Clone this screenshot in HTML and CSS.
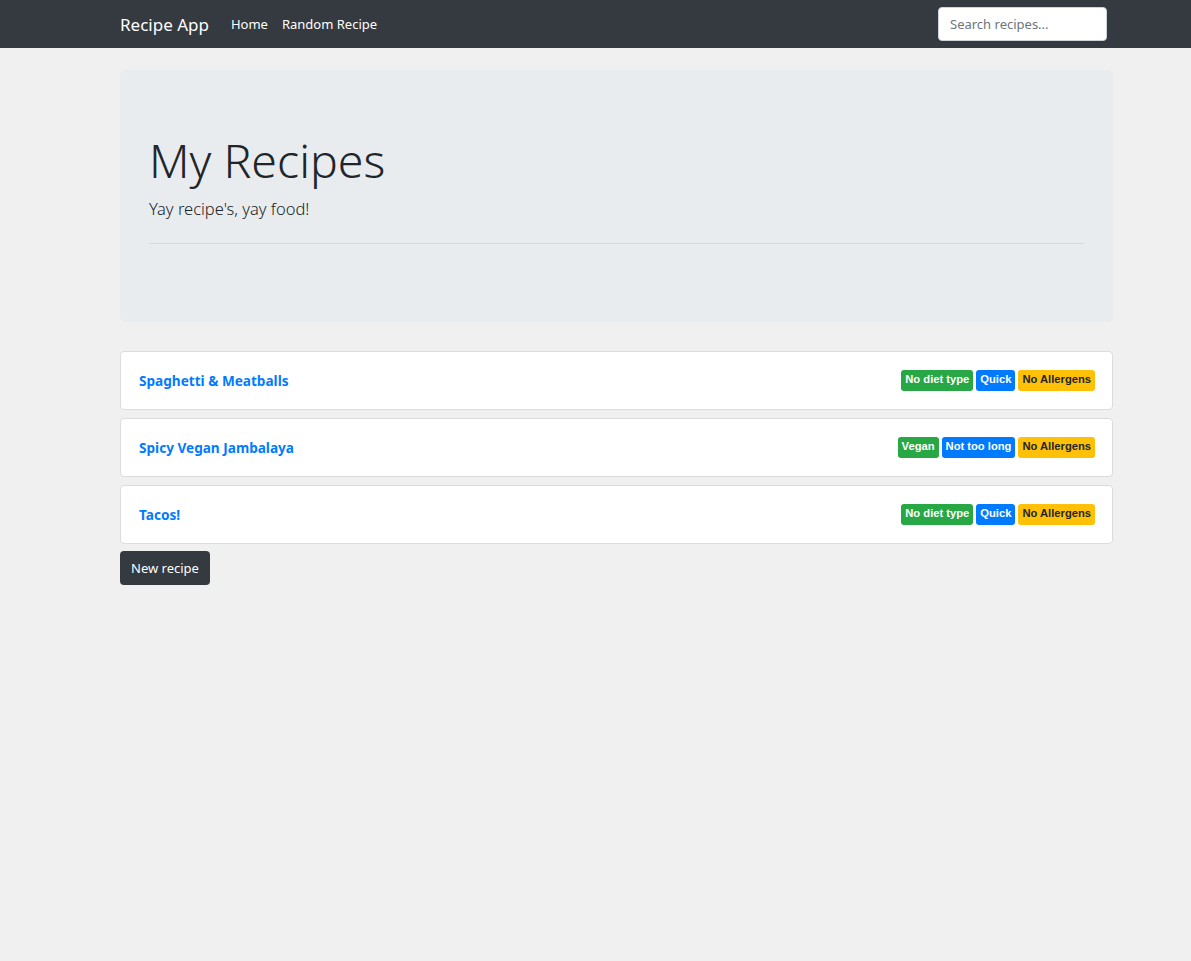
FILE: index.html
```html
<!DOCTYPE html>
<html lang="en">
<head>
<meta charset="utf-8">
<title>Recipe App</title>
<link rel="stylesheet" href="styles.css">
</head>
<body>
<nav class="navbar">
  <div class="nav-left">
    <a class="brand" href="#">Recipe App</a>
    <a class="nav-link" href="#">Home</a>
    <a class="nav-link" href="#">Random Recipe</a>
  </div>
  <input class="search" type="text" placeholder="Search recipes...">
</nav>
<main class="container">
  <section class="jumbotron">
    <h1 class="display">My Recipes</h1>
    <p class="lead">Yay recipe's, yay food!</p>
    <hr class="rule">
  </section>
  <ul class="recipe-list">
    <li class="recipe-card">
      <a class="recipe-title" href="#">Spaghetti &amp; Meatballs</a>
      <div class="badges">
        <span class="badge green">No diet type</span>
        <span class="badge blue">Quick</span>
        <span class="badge yellow">No Allergens</span>
      </div>
    </li>
    <li class="recipe-card">
      <a class="recipe-title" href="#">Spicy Vegan Jambalaya</a>
      <div class="badges">
        <span class="badge green">Vegan</span>
        <span class="badge blue">Not too long</span>
        <span class="badge yellow">No Allergens</span>
      </div>
    </li>
    <li class="recipe-card">
      <a class="recipe-title" href="#">Tacos!</a>
      <div class="badges">
        <span class="badge green">No diet type</span>
        <span class="badge blue">Quick</span>
        <span class="badge yellow">No Allergens</span>
      </div>
    </li>
  </ul>
  <button class="btn-dark" type="button">New recipe</button>
</main>
</body>
</html>
```

FILE: styles.css
```css
* { box-sizing: border-box; }
html, body { margin: 0; padding: 0; }
body {
  background: #f0f0f0;
  font-family: "Noto Sans", "Open Sans", sans-serif;
  color: #212529;
  font-size: 14px;
}
.navbar {
  height: 48px;
  background: #343a40;
  display: flex;
  align-items: center;
  justify-content: space-between;
  padding: 0 84px 0 120px;
}
.nav-left { display: flex; align-items: center; }
.brand {
  color: #fff;
  text-decoration: none;
  font-size: 17px;
  margin-right: 22px;
}
.nav-link {
  color: #fff;
  text-decoration: none;
  font-size: 13px;
  margin-right: 14px;
}
.search {
  width: 169px;
  height: 34px;
  margin-top: -1px;
  border: 1px solid #ced4da;
  border-radius: 4px;
  padding: 0 11px;
  font-family: inherit;
  font-size: 13px;
  color: #495057;
  background: #fff;
}
.search::placeholder { color: #6c757d; }
.container {
  padding: 22px 78px 0 120px;
}
.jumbotron {
  background: #e9ecef;
  border-radius: 5px;
  height: 252px;
  padding: 63px 29px 0 29px;
}
.display {
  margin: 0;
  font-weight: 300;
  font-size: 46.5px;
  line-height: 1.2;
}
.lead {
  margin: 8px 0 0 0;
  font-size: 16.5px;
  font-weight: 300;
}
.rule {
  margin: 23px 0 0 0;
  border: 0;
  border-top: 1px solid #d5d8dc;
}
.recipe-list {
  list-style: none;
  margin: 29px 0 0 0;
  padding: 0;
  display: flex;
  flex-direction: column;
  gap: 8px;
}
.recipe-card {
  height: 59px;
  background: #fff;
  border: 1px solid #dcdcdc;
  border-radius: 4px;
  display: flex;
  align-items: center;
  justify-content: space-between;
  padding: 0 17px 0 18px;
}
.recipe-title {
  color: #007bff;
  font-weight: 700;
  font-size: 13.6px;
  text-decoration: none;
}
.badges { display: flex; gap: 3px; margin-top: 0; }
.badge {
  font-family: "Liberation Sans", Arial, sans-serif;
  font-weight: 700;
  font-size: 11.2px;
  line-height: 1;
  padding: 4px 4px 6px 4px;
  border-radius: 3px;
  color: #fff;
}
.green { background: #28a745; }
.blue { background: #007bff; }
.yellow { background: #ffc107; color: #212529; }
.btn-dark {
  margin-top: 7px;
  height: 34px;
  padding: 0 11px;
  background: #343a40;
  color: #fff;
  border: 0;
  border-radius: 4px;
  font-family: inherit;
  font-size: 13px;
}
```
